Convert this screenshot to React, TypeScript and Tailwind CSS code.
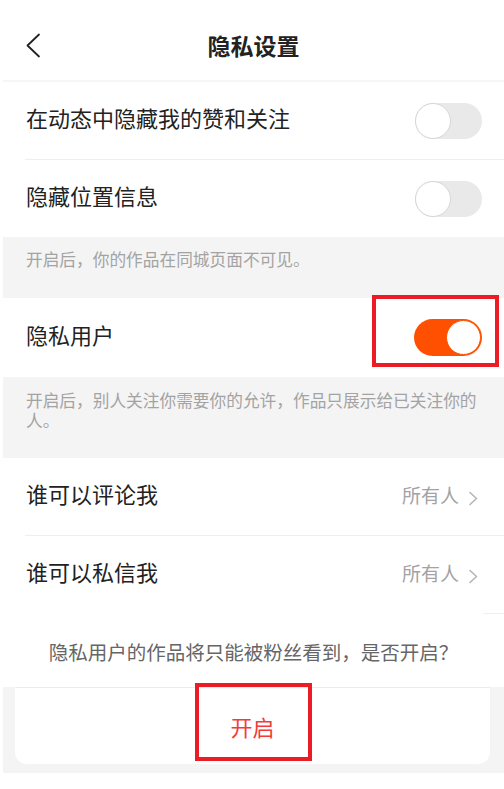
import React from "react";

const font = { fontFamily: '"Noto Sans CJK SC", "Noto Sans", sans-serif' };

function Toggle({ on }: { on?: boolean }) {
  if (on) {
    return (
      <div className="flex h-[37px] w-[68px] items-center justify-end rounded-full bg-[#fe5000]">
        <div className="h-[35px] w-[35px] rounded-full border border-[#fe5000] bg-white mr-px" />
      </div>
    );
  }
  return (
    <div className="flex h-[36px] w-[67px] items-center rounded-full bg-[#e9e9e9]">
      <div className="h-[36px] w-[36px] rounded-full border border-[#d6d6d6] bg-white" />
    </div>
  );
}

function Chevron() {
  return (
    <svg className="mt-[3px]" width="11" height="15" viewBox="0 0 11 15" fill="none">
      <path d="M2 1.5 L8.5 7.5 L2 13.5" stroke="#b5b5b5" strokeWidth="1.6" strokeLinecap="round" strokeLinejoin="round" />
    </svg>
  );
}

export default function App() {
  return (
    <div className="min-h-[789px] w-[504px] bg-white pl-[3px] text-[#222]" style={font}>
      {/* header */}
      <div className="relative flex h-[80px] items-center justify-center">
        <svg className="absolute left-[22px] top-[33px]" width="16" height="26" viewBox="0 0 16 26" fill="none">
          <path d="M14 1.5 L2.5 12.5 L14 23.5" stroke="#222" strokeWidth="1.8" strokeLinecap="round" strokeLinejoin="round" />
        </svg>
        <div className="pt-[10px] text-[23px] font-bold leading-none text-[#222]">隐私设置</div>
      </div>
      <div className="h-[2px] bg-[#f6f6f6]" />

      {/* row 1 */}
      <div className="flex h-[77px] items-center justify-between pl-[23px] pr-[22px]">
        <span className="mb-[7px] text-[22px] leading-none">在动态中隐藏我的赞和关注</span>
        <Toggle />
      </div>
      <div className="ml-[22px] h-px bg-[#efefef]" />
      {/* row 2 */}
      <div className="flex h-[77px] items-center justify-between pl-[23px] pr-[22px]">
        <span className="mb-[7px] text-[22px] leading-none">隐藏位置信息</span>
        <Toggle />
      </div>
      <div className="h-[61px] bg-[#f4f4f4] pl-[23px] pt-[12px] text-[16.7px] leading-[20px] text-[#a3a3a3]">
        开启后，你的作品在同城页面不可见。
      </div>

      {/* row 3 */}
      <div className="relative flex h-[79px] items-center justify-between pl-[23px] pr-[22px]">
        <span className="mb-[7px] text-[22px] leading-none">隐私用户</span>
        <Toggle on />
        <div className="absolute left-[369px] top-[-3px] h-[72px] w-[127px] border-[4px] border-[#ec1c24]" />
      </div>
      <div className="h-[81px] bg-[#f4f4f4] pl-[23px] pr-[20px] pt-[13px] text-[16.7px] leading-[20px] text-[#a3a3a3]">
        开启后，别人关注你需要你的允许，作品只展示给已关注你的人。
      </div>

      {/* row 4 */}
      <div className="flex h-[77px] items-center justify-between pl-[23px] pr-[25px]">
        <span className="mb-[7px] text-[22px] leading-none">谁可以评论我</span>
        <div className="flex items-center gap-[9px]">
          <span className="mb-[5px] text-[19px] leading-none text-[#a3a3a3]">所有人</span>
          <Chevron />
        </div>
      </div>
      <div className="ml-[22px] h-px bg-[#efefef]" />
      {/* row 5 */}
      <div className="flex h-[77px] items-center justify-between pl-[23px] pr-[25px]">
        <span className="mb-[7px] text-[22px] leading-none">谁可以私信我</span>
        <div className="flex items-center gap-[9px]">
          <span className="mb-[5px] text-[19px] leading-none text-[#a3a3a3]">所有人</span>
          <Chevron />
        </div>
      </div>
      <div className="ml-[480px] h-px bg-[#f0f0f0]" />

      {/* dialog */}
      <div className="flex h-[73px] items-center justify-center pt-[2px] text-[19.5px] leading-none text-[#666]">
        隐私用户的作品将只能被粉丝看到，是否开启？
      </div>
      <div className="mt-[5px] bg-[#f4f4f4] pb-[9px]">
        <div className="relative -mt-[5px] ml-[12px] flex h-[77px] w-[475px] items-center justify-center rounded-b-[12px] border-t border-[#ececec] bg-white">
          <span className="text-[22px] leading-none text-[#f23c3c]">开启</span>
          <div className="absolute left-[180px] top-[-5px] h-[78px] w-[117px] border-[4px] border-[#ec1c24]" />
        </div>
      </div>
    </div>
  );
}
